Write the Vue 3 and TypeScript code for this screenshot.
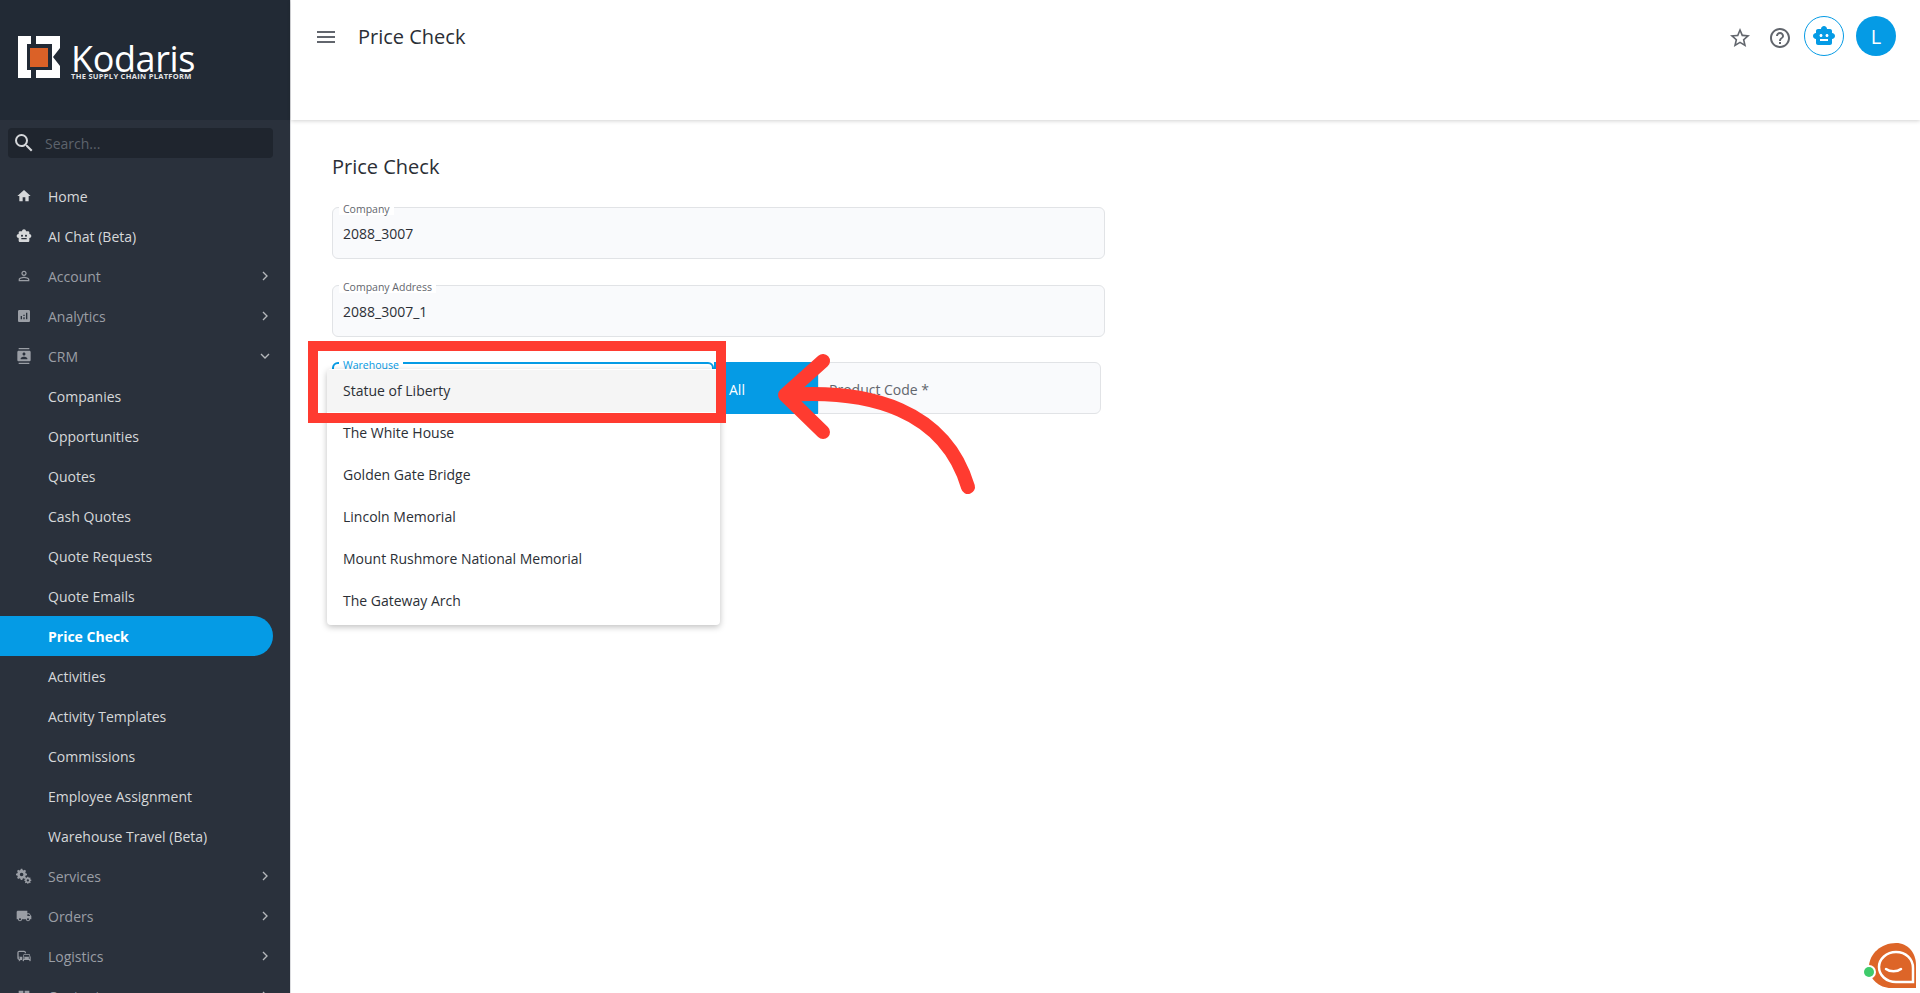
<script setup lang="ts">
interface NavItem { label: string; icon?: string; chev?: 'r' | 'd'; sub?: boolean; active?: boolean; bright?: boolean }
const P: Record<string, string> = {
  home: 'M10 20v-6h4v6h5v-8h3L12 3 2 12h3v8z',
  bot: 'M20 9V7c0-1.1-.9-2-2-2h-3c0-1.66-1.34-3-3-3S9 3.34 9 5H6c-1.1 0-2 .9-2 2v2c-1.66 0-3 1.34-3 3s1.34 3 3 3v4c0 1.1.9 2 2 2h12c1.1 0 2-.9 2-2v-4c1.66 0 3-1.34 3-3s-1.34-3-3-3zM7.5 11.5c0-.83.67-1.5 1.5-1.5s1.5.67 1.5 1.5S9.83 13 9 13s-1.5-.67-1.5-1.5zM16 17H8v-2h8v2zm-1-4c-.83 0-1.5-.67-1.5-1.5S14.17 10 15 10s1.5.67 1.5 1.5S15.83 13 15 13z',
  person: 'M12 5.9c1.16 0 2.1.94 2.1 2.1s-.94 2.1-2.1 2.1S9.9 9.16 9.9 8s.94-2.1 2.1-2.1m0 9c2.97 0 6.1 1.46 6.1 2.1v1.1H5.9V17c0-.64 3.13-2.1 6.1-2.1M12 4C9.79 4 8 5.79 8 8s1.79 4 4 4 4-1.79 4-4-1.79-4-4-4zm0 9c-2.67 0-8 1.34-8 4v3h16v-3c0-2.66-5.33-4-8-4z',
  analytics: 'M19 3H5c-1.1 0-2 .9-2 2v14c0 1.1.9 2 2 2h14c1.1 0 2-.9 2-2V5c0-1.1-.9-2-2-2zM9 17H7v-5h2v5zm4 0h-2v-3h2v3zm0-5h-2v-2h2v2zm4 5h-2V7h2v10z',
  crm: 'M20 0H4v2h16V0zM4 24h16v-2H4v2zM20 4H4c-1.100 0-2 .9-2 2v12c0 1.100.9 2 2 2h16c1.100 0 2-.9 2-2V6c0-1.100-.9-2-2-2zm-8 2.750c1.240 0 2.250 1.010 2.250 2.250s-1.010 2.250-2.250 2.250S9.750 10.240 9.750 9 10.760 6.750 12 6.750zM17 17H7v-1.500c0-1.670 3.330-2.500 5-2.500s5 .83 5 2.500V17z',
  gears: 'M9.500 1l.5 2.100 1.500.7 1.900-1 1.600 1.700-1.100 1.800.6 1.600 2 .6v2.300l-2 .6-.6 1.600 1.100 1.800-1.600 1.600-1.900-1-1.500.6-.5 2.100H7.200l-.6-2.100-1.500-.6-1.800 1-1.700-1.600L2.700 13 2 11.400 0 10.800V8.500l2-.6.7-1.600-1.100-1.800 1.700-1.700 1.800 1 1.500-.7L7.200 1h2.300zM8.400 7a2.700 2.700 0 100 5.400 2.700 2.700 0 000-5.400zM18.500 13l.3 1.300 1 .4 1.200-.6 1 1-.7 1.200.4 1 1.300.4v1.400l-1.300.4-.4 1 .7 1.200-1 1-1.200-.6-1 .4-.3 1.300h-1.500l-.4-1.300-1-.4-1.100.6-1.100-1 .7-1.200-.4-1-1.300-.4v-1.400l1.300-.4.4-1-.7-1.200 1.100-1 1.100.6 1-.4.4-1.300h1.500zm-.7 4a1.700 1.700 0 100 3.400 1.700 1.700 0 000-3.400z',
  truck: 'M20 8h-3V4H3c-1.100 0-2 .9-2 2v11h2c0 1.660 1.340 3 3 3s3-1.340 3-3h6c0 1.660 1.340 3 3 3s3-1.340 3-3h2v-5l-3-4zM6 18.500c-.83 0-1.500-.67-1.500-1.500s.67-1.500 1.500-1.500 1.500.67 1.500 1.500-.67 1.500-1.500 1.500zm13.500-9l1.960 2.500H17V9.500h2.500zm-1.500 9c-.83 0-1.500-.67-1.500-1.500s.67-1.500 1.500-1.500 1.500.67 1.500 1.500-.67 1.500-1.500 1.500z',
  commute: 'M12 4H5C3.340 4 2 5.340 2 7v8c0 1.660 1.340 3 3 3l-1 1v1h1l2-2.030L9 18v-5H4V5.980L13 6v2h2V7c0-1.660-1.340-3-3-3zM5 14c.55 0 1 .45 1 1s-.45 1-1 1-1-.45-1-1 .45-1 1-1zm15.570-4.340c-.14-.4-.52-.66-.97-.66h-7.190c-.46 0-.83.26-.98.66L10 13.770l.01 5.510c0 .38.31.72.69.72h.62c.38 0 .68-.38.68-.76V18h8v1.240c0 .38.31.76.69.76h.61c.38 0 .69-.34.69-.72l.01-1.370v-4.140l-1.430-4.070zm-8.160.34h7.190l1.030 3h-9.250l1.030-3zM12 16c-.55 0-1-.45-1-1s.45-1 1-1 1 .45 1 1-.45 1-1 1zm8 0c-.55 0-1-.45-1-1s.45-1 1-1 1 .45 1 1-.45 1-1 1z',
  box: 'M4 4h7v7H4zM13 4h7v7h-7zM4 13h7v7H4zM13 13h7v7h-7z',
}
const items: NavItem[] = [
  { label: 'Home', icon: 'home', bright: true },
  { label: 'AI Chat (Beta)', icon: 'bot', bright: true },
  { label: 'Account', icon: 'person', chev: 'r' },
  { label: 'Analytics', icon: 'analytics', chev: 'r' },
  { label: 'CRM', icon: 'crm', chev: 'd' },
  { label: 'Companies', sub: true },
  { label: 'Opportunities', sub: true },
  { label: 'Quotes', sub: true },
  { label: 'Cash Quotes', sub: true },
  { label: 'Quote Requests', sub: true },
  { label: 'Quote Emails', sub: true },
  { label: 'Price Check', sub: true, active: true },
  { label: 'Activities', sub: true },
  { label: 'Activity Templates', sub: true },
  { label: 'Commissions', sub: true },
  { label: 'Employee Assignment', sub: true },
  { label: 'Warehouse Travel (Beta)', sub: true },
  { label: 'Services', icon: 'gears', chev: 'r' },
  { label: 'Orders', icon: 'truck', chev: 'r' },
  { label: 'Logistics', icon: 'commute', chev: 'r' },
  { label: 'Content', icon: 'box', chev: 'r' },
]
const options = ['Statue of Liberty', 'The White House', 'Golden Gate Bridge', 'Lincoln Memorial', 'Mount Rushmore National Memorial', 'The Gateway Arch']
</script>

<template>
  <div class="app">
    <aside class="side">
      <div class="brand">
        <svg class="mark" width="44" height="44" viewBox="0 0 44 44">
          <path fill="#fff" d="M0 0h13v8H9v26h4v8H0z" />
          <path fill="#fff" d="M18 0H42V12L35 21L42 30V42H18V34H34V8H18z" />
          <rect x="12" y="12" width="18" height="19" fill="#db6127" />
        </svg>
        <div class="word">
          <div class="kod">Kodaris</div>
          <div class="tag">THE SUPPLY CHAIN PLATFORM</div>
        </div>
      </div>
      <div class="search">
        <svg width="24" height="24" viewBox="0 0 24 24"><path fill="#d5d7da" d="M15.500 14h-.79l-.28-.27A6.470 6.470 0 0016 9.500 6.500 6.500 0 109.500 16c1.610 0 3.090-.59 4.230-1.570l.27.28v.79l5 4.990L20.490 19l-4.990-5zm-6 0C7.010 14 5 11.990 5 9.500S7.010 5 9.500 5 14 7.010 14 9.500 11.990 14 9.500 14z" /></svg>
        <span>Search...</span>
      </div>
      <nav class="nav">
        <div v-for="it in items" :key="it.label" class="row" :class="{ sub: it.sub, active: it.active, bright: it.bright }">
          <svg v-if="it.icon" class="ic" width="16" height="16" viewBox="0 0 24 24"><path fill="currentColor" :d="P[it.icon]" /></svg>
          <span class="lb">{{ it.label }}</span>
          <svg v-if="it.chev" class="chev" width="16" height="16" viewBox="0 0 24 24">
            <path fill="none" stroke="currentColor" stroke-width="2" :d="it.chev === 'r' ? 'M9 6l6 6-6 6' : 'M6 9l6 6 6-6'" />
          </svg>
        </div>
      </nav>
    </aside>

    <div class="main">
      <header class="top">
        <svg width="24" height="24" viewBox="0 0 24 24" class="burger"><path fill="#62666d" d="M3 18h18v-2H3v2zm0-5h18v-2H3v2zm0-7v2h18V6H3z" /></svg>
        <div class="title">Price Check</div>
        <div class="actions">
          <svg class="low star" width="24" height="24" viewBox="0 0 24 24"><path fill="#62666d" d="M22 9.240l-7.190-.62L12 2 9.190 8.630 2 9.240l5.460 4.730L5.820 21 12 17.270 18.180 21l-1.630-7.030L22 9.240zM12 15.400l-3.760 2.270 1-4.280-3.320-2.880 4.380-.38L12 6.100l1.710 4.040 4.380.38-3.320 2.880 1 4.280L12 15.400z" /></svg>
          <svg class="low" width="24" height="24" viewBox="0 0 24 24"><path fill="#62666d" d="M11 18h2v-2h-2v2zm1-16C6.480 2 2 6.480 2 12s4.480 10 10 10 10-4.480 10-10S17.520 2 12 2zm0 18c-4.410 0-8-3.590-8-8s3.590-8 8-8 8 3.590 8 8-3.590 8-8 8zm0-14c-2.210 0-4 1.790-4 4h2c0-1.100.9-2 2-2s2 .9 2 2c0 2-3 1.750-3 5h2c0-2.250 3-2.500 3-5 0-2.210-1.790-4-4-4z" /></svg>
          <div class="botbtn"><svg width="24" height="24" viewBox="0 0 24 24"><path fill="#059be5" d="M20 9V7c0-1.100-.9-2-2-2h-3c0-1.660-1.340-3-3-3S9 3.340 9 5H6c-1.100 0-2 .9-2 2v2c-1.660 0-3 1.340-3 3s1.340 3 3 3v4c0 1.100.9 2 2 2h12c1.100 0 2-.9 2-2v-4c1.660 0 3-1.340 3-3s-1.340-3-3-3zM7.500 11.500c0-.83.67-1.500 1.500-1.500s1.500.67 1.500 1.500S9.830 13 9 13s-1.500-.67-1.500-1.500zM16 17H8v-2h8v2zm-1-4c-.83 0-1.500-.67-1.500-1.500S14.170 10 15 10s1.500.67 1.500 1.500S15.830 13 15 13z" /></svg></div>
          <div class="avatar">L</div>
        </div>
      </header>

      <section class="content">
        <h1>Price Check</h1>
        <div class="field wide"><label>Company</label><div class="val">2088_3007</div></div>
        <div class="field wide"><label>Company Address</label><div class="val">2088_3007_1</div></div>
        <div class="third">
          <div class="field wh"><label class="blue">Warehouse</label></div>
          <button class="allbtn">All</button>
          <div class="field prod"><span>Product Code *</span></div>
        </div>
      </section>
    </div>

    <div class="menu">
      <div v-for="(o, i) in options" :key="o" class="opt" :class="{ hover: i === 0 }">{{ o }}</div>
    </div>
    <div class="redbox"></div>
    <svg class="arrow" width="1920" height="993" viewBox="0 0 1920 993">
      <path fill="none" stroke="#ff3b30" stroke-width="14" stroke-linecap="round" stroke-linejoin="round" d="M968 487C945 410 870 389 786 395M823 361L785 395L823 432" />
    </svg>
    <svg class="chat" width="52" height="50" viewBox="0 0 52 50">
      <path fill="#dd6528" d="M30 2C15 2 3 13 3 26c0 12 10 21 22 21h25V24C50 12 42 2 30 2z" />
      <path fill="none" stroke="#fff" stroke-width="2.500" d="M30 11c-9.500 0-17 7-17 15s7 15 17 15h17V27C47 18 40 11 30 11z" />
      <path fill="none" stroke="#fff" stroke-width="2.500" stroke-linecap="round" d="M20 28c4 3 11 3 15 0" />
      <circle cx="3" cy="31" r="7" fill="#fff" />
      <circle cx="3" cy="31" r="5" fill="#3ecb6b" />
    </svg>
  </div>
</template>

<style scoped>
.app { position: relative; display: flex; width: 1920px; height: 993px; overflow: hidden; background: #fff; font-family: "Open Sans", "Noto Sans", sans-serif; color: #2b2f36; }
.side { width: 290px; flex: none; background: #2a313c; overflow: hidden; border-right: 1px solid #dcdde0; box-sizing: content-box; }
.brand { height: 120px; background: #222a35; display: flex; align-items: flex-start; padding: 36px 0 0 18px; box-sizing: border-box; gap: 9px; }
.mark { flex: none; }
.word { color: #fff; }
.kod { font-size: 36px; line-height: 27px; margin-top: 9px; letter-spacing: -0.4px; }
.tag { font-size: 7.500px; font-weight: 700; line-height: 8px; letter-spacing: 0.3px; white-space: nowrap; color: #e4e5e7; }
.search { margin: 8px 17px 0 8px; height: 30px; background: #1f252e; border-radius: 4px; display: flex; align-items: center; padding-left: 4px; gap: 9px; color: #5d636c; font-size: 14px; }
.nav { margin-top: 18px; }
.row { position: relative; height: 40px; width: 273px; display: flex; align-items: center; padding-left: 48px; box-sizing: border-box; color: #9a9ea5; font-size: 14px; border-radius: 0 20px 20px 0; }
.row.sub, .row.bright { color: #d6d8da; }
.row.active { background: #059be5; color: #fff; font-weight: 700; }
.ic { position: absolute; left: 16px; top: 12px; }
.lb { white-space: nowrap; }
.chev { position: absolute; left: 257px; top: 12px; color: #b5b8bc; }
.main { flex: 1; min-width: 0; display: flex; flex-direction: column; }
.top { height: 120px; box-sizing: border-box; display: flex; align-items: flex-start; padding: 25px 24px 0 23px; box-shadow: 0 1px 4px rgba(0, 0, 0, .18); }
.burger { flex: none; }
.title { font-size: 20px; line-height: 24px; margin-left: 20px; color: #2b2f36; }
.actions { margin-left: auto; display: flex; align-items: center; gap: 12px; margin-top: -10px; height: 42px; }
.low { margin-top: 3px; }
.star { margin-right: 4px; }
.botbtn, .avatar { width: 40px; height: 40px; border-radius: 50%; display: flex; align-items: center; justify-content: center; box-sizing: border-box; }
.botbtn { border: 1px solid #059be5; }
.avatar { background: #059be5; color: #fff; font-size: 20px; }
.content { padding: 33px 0 0 41px; }
h1 { font-size: 20px; font-weight: 400; line-height: 28px; margin: 0 0 26px; color: #2b2f36; }
.field { position: relative; box-sizing: border-box; height: 52px; background: #f9fafc; border: 1px solid #e1e3e6; border-radius: 6px; }
.wide { width: 773px; margin-bottom: 26px; }
.field label { position: absolute; left: 6px; top: -4px; padding: 0 4px; background: #fff; font-size: 10.500px; line-height: 11px; color: #62666d; }
.field label.blue { color: #059be5; left: 5px; top: -4px; }
.val { font-size: 14px; line-height: 52px; padding-left: 10px; color: #2b2f36; }
.third { display: flex; margin-top: -1px; }
.wh { width: 382px; background: #fff; border: 2px solid #059be5; }
.allbtn { width: 104px; height: 52px; border: 0; background: #059be5; color: #fff; font: inherit; font-size: 14px; text-align: left; padding: 2px 0 0 15px; }
.prod { width: 283px; display: flex; align-items: center; padding: 2px 0 0 10px; border-radius: 0 6px 6px 0; font-size: 14px; color: #62666d; }
.menu { position: absolute; left: 327px; top: 369px; width: 393px; height: 256px; background: #fff; border-radius: 4px; box-shadow: 0 2px 6px rgba(0, 0, 0, .25); padding-top: 1px; box-sizing: border-box; }
.opt { height: 42px; line-height: 42px; padding-left: 16px; font-size: 14px; color: #2b2f36; }
.opt.hover { background: #f5f5f5; }
.redbox { position: absolute; left: 308px; top: 341px; width: 418px; height: 82px; box-sizing: border-box; border: 10px solid #ff3b30; }
.arrow { position: absolute; left: 0; top: 0; pointer-events: none; }
.chat { position: absolute; left: 1866px; top: 941px; overflow: visible; }
</style>
